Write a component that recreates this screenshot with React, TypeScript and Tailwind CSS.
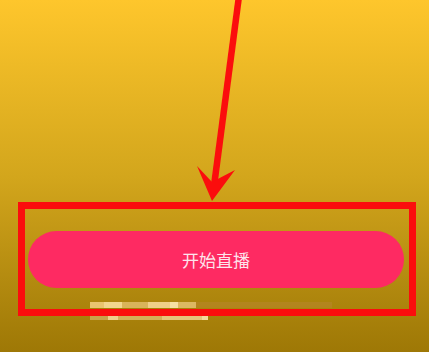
import React from "react";

const blocks1 = [
  { w: 14, c: "#e9c470" },
  { w: 18, c: "#f2d68e" },
  { w: 26, c: "#d9b45a" },
  { w: 22, c: "#efd089" },
  { w: 8, c: "#f6e0a2" },
  { w: 18, c: "#dcb862" },
];

export default function App() {
  return (
    <div
      className="relative h-[352px] w-full overflow-hidden bg-gradient-to-b from-[#fec62c] via-[#d3a61c] to-[#9e7806]"
      style={{ fontFamily: '"Noto Sans CJK SC", "Noto Sans", sans-serif' }}
    >
      <div className="flex flex-col pt-[231px]">
        <button className="ml-[28px] flex h-[57px] w-[376px] items-center justify-center rounded-full bg-[#fe2a62] text-[17px] text-[#fde4ec]">
          开始直播
        </button>
        <div className="ml-[90px] mt-[14px] flex h-[6px] blur-[0.6px]">
          {blocks1.map((b, i) => (
            <div key={i} style={{ width: b.w, backgroundColor: b.c }} />
          ))}
          <div className="w-[136px] bg-[#b7862a] opacity-60" />
        </div>
        <div className="ml-[90px] mt-[8px] flex h-[4px] blur-[0.6px]">
          <div className="w-[18px] bg-[#c9a34a]" />
          <div className="w-[10px] bg-[#efd08a]" />
          <div className="w-[44px] bg-[#d4ae58]" />
          <div className="w-[40px] bg-[#e6c57a]" />
          <div className="w-[6px] bg-[#f4dc9c]" />
        </div>
      </div>

      {/* annotation rectangle */}
      <div className="absolute left-[18px] top-[202px] h-[114px] w-[398px] border-[7px] border-[#fb0d0d]" />

      {/* annotation arrow */}
      <svg className="absolute left-0 top-0" width="429" height="352" viewBox="0 0 429 352">
        <line x1="239" y1="-4" x2="214" y2="186" stroke="#fb0d0d" strokeWidth="6.5" />
        <path d="M212 201 L197 166 L212 182 L235 170 Z" fill="#fb0d0d" />
      </svg>
    </div>
  );
}
